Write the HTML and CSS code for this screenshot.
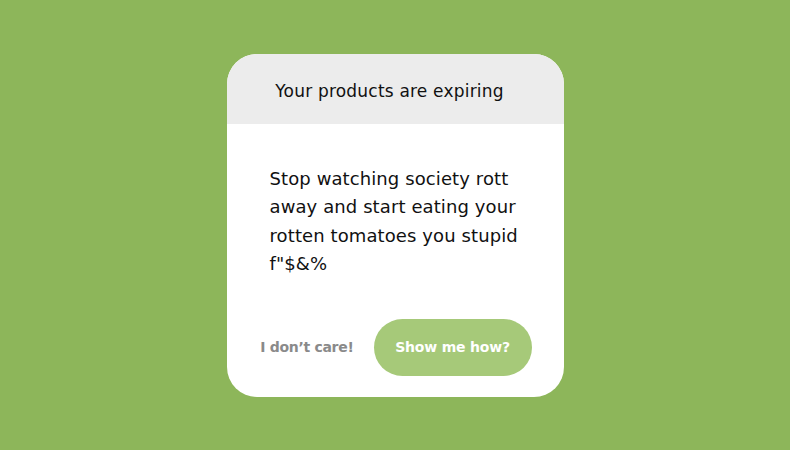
FILE: index.html
```html
<!DOCTYPE html>
<html>
<head>
<meta charset="utf-8">
<link rel="stylesheet" href="styles.css">
</head>
<body>
<div class="card">
  <div class="card-header">Your products are expiring</div>
  <div class="card-body">
    <p class="message">Stop watching society rott away and start eating your rotten tomatoes you stupid f"$&amp;%</p>
  </div>
  <div class="card-actions">
    <button class="btn-ghost">I don’t care!</button>
    <button class="btn-primary">Show me how?</button>
  </div>
</div>
</body>
</html>
```
FILE: styles.css
```css
html, body {
  margin: 0;
  padding: 0;
}
body {
  width: 790px;
  height: 450px;
  background: #8db65a;
  display: flex;
  align-items: center;
  justify-content: center;
  font-family: "DejaVu Sans", "Noto Sans", sans-serif;
}
.card {
  width: 337px;
  height: 343px;
  background: #ffffff;
  border-radius: 30px;
  overflow: hidden;
  display: flex;
  flex-direction: column;
}
.card-header {
  height: 70px;
  box-sizing: border-box;
  padding: 5px 11px 0 0;
  background: #ececec;
  display: flex;
  align-items: center;
  justify-content: center;
  font-size: 17px;
  color: #111;
  letter-spacing: 0.2px;
}
.card-body {
  flex: 1;
  padding: 41px 30px 0 43px;
}
.message {
  margin: 0;
  font-size: 18px;
  line-height: 28.5px;
  color: #111;
  letter-spacing: 0.1px;
}
.card-actions {
  display: flex;
  align-items: center;
  justify-content: flex-end;
  gap: 20px;
  padding: 0 32px 21px 0;
}
.btn-ghost {
  border: none;
  background: none;
  font-family: inherit;
  font-weight: bold;
  font-size: 14px;
  color: #8a8a8a;
  padding: 0;
  letter-spacing: -0.3px;
}
.btn-primary {
  border: none;
  width: 158px;
  height: 57px;
  border-radius: 29px;
  background: #a6c979;
  color: #ffffff;
  font-family: inherit;
  font-weight: bold;
  font-size: 14px;
  letter-spacing: -0.2px;
}
```
